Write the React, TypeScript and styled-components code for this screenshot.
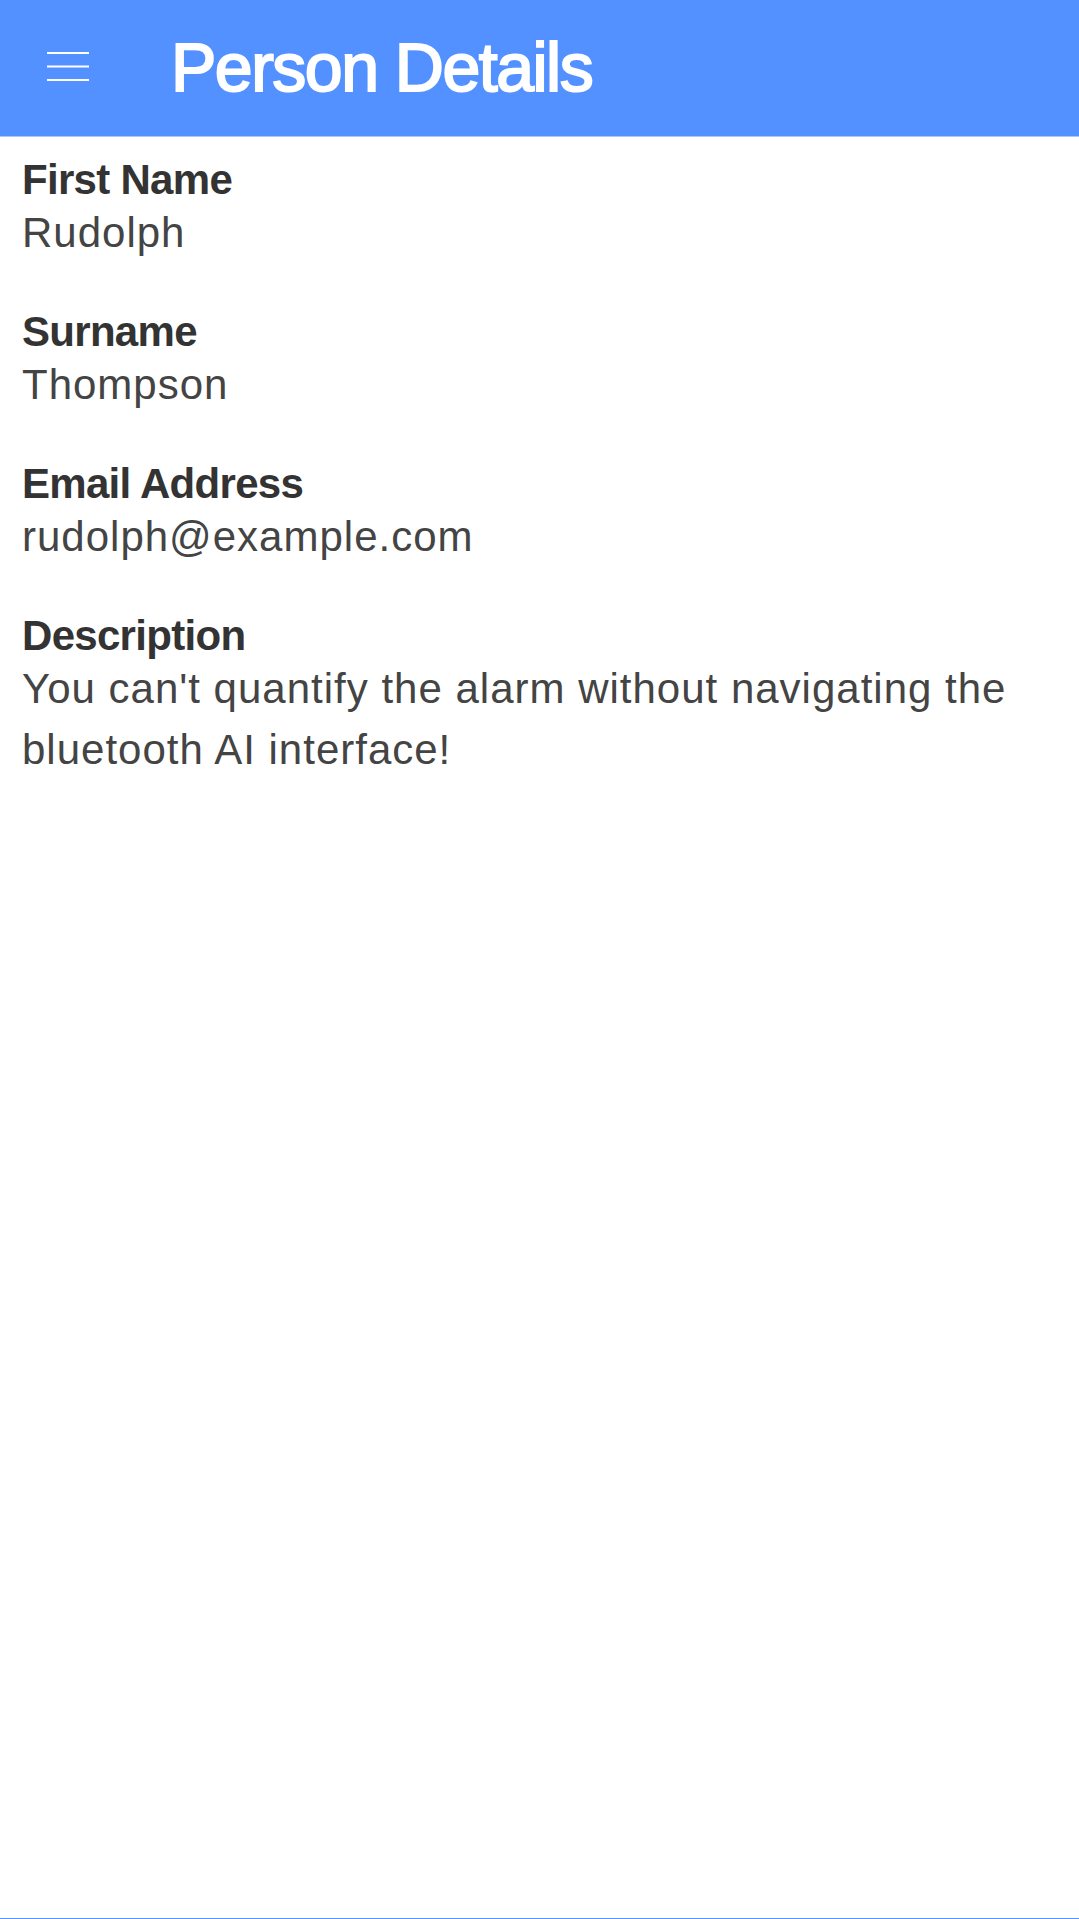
import React from 'react';
import styled, { createGlobalStyle } from 'styled-components';

const GlobalStyle = createGlobalStyle`
  html, body {
    margin: 0;
    padding: 0;
    background: #ffffff;
  }
  * {
    box-sizing: border-box;
  }
`;

const fields = [
  { label: 'First Name', value: 'Rudolph' },
  { label: 'Surname', value: 'Thompson' },
  { label: 'Email Address', value: 'rudolph@example.com' },
  { label: 'Description', value: "You can't quantify the alarm without navigating the bluetooth AI interface!" },
];

const Page = () => (
  <>
    <GlobalStyle />
    <Screen>
      <TopBar>
        <MenuButton aria-label="menu">
          <svg width="42" height="30" viewBox="0 0 42 30">
            <rect x="0" y="0" width="42" height="2" fill="#fff" />
            <rect x="0" y="13.5" width="42" height="2" fill="#fff" />
            <rect x="0" y="27" width="42" height="2" fill="#fff" />
          </svg>
        </MenuButton>
        <Title>Person Details</Title>
      </TopBar>
      <Details>
        {fields.map((f) => (
          <Field key={f.label}>
            <Label>{f.label}</Label>
            <Value>{f.value}</Value>
          </Field>
        ))}
      </Details>
    </Screen>
  </>
);

const Screen = styled.div`
  min-height: 100vh;
  display: flex;
  flex-direction: column;
  border-bottom: 1px solid #5291ff;
  font-family: 'Liberation Sans', Arial, sans-serif;
`;

const TopBar = styled.header`
  height: 137px;
  background: #5291ff;
  border-bottom: 1px solid #a9c8ff;
  display: flex;
  align-items: center;
  padding-left: 47px;
  gap: 82px;
`;

const MenuButton = styled.div`
  display: flex;
  align-items: center;
  margin-top: -2px;
`;

const Title = styled.h1`
  margin: 0;
  margin-top: -2px;
  color: #ffffff;
  font-size: 68px;
  font-weight: 400;
  letter-spacing: -1.5px;
  -webkit-text-stroke: 2px #ffffff;
`;

const Details = styled.main`
  padding: 20px 22px 0;
  flex: 1;
`;

const Field = styled.section`
  margin-bottom: 46px;
`;

const Label = styled.div`
  color: #333333;
  font-size: 42px;
  line-height: 45px;
  font-weight: 700;
  letter-spacing: -0.7px;
`;

const Value = styled.div`
  color: #444444;
  font-size: 42px;
  line-height: 61px;
  font-weight: 400;
  letter-spacing: 1px;
`;

export default Page;
